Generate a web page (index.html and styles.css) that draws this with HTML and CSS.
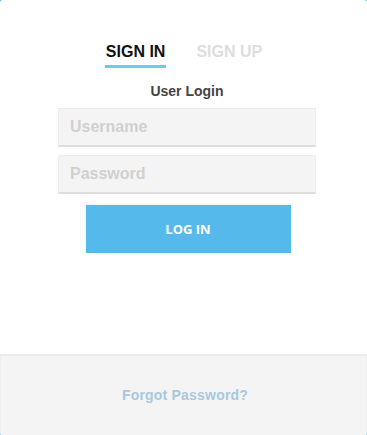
FILE: index.html
```html
<!DOCTYPE html>
<html>
<head>
<meta charset="utf-8">
<link rel="stylesheet" href="styles.css">
</head>
<body>
<div class="card">
  <div class="main">
    <div class="tabs">
      <span class="tab active">SIGN IN</span>
      <span class="tab">SIGN UP</span>
    </div>
    <div class="title">User Login</div>
    <div class="field">Username</div>
    <div class="field">Password</div>
    <div class="btn">LOG IN</div>
  </div>
  <div class="footer">
    <span class="forgot">Forgot Password?</span>
  </div>
</div>
</body>
</html>
```
FILE: styles.css
```css
html, body {
  margin: 0;
  padding: 0;
  background: #0a9cf0;
}
.card {
  width: 367px;
  height: 435px;
  background: #fff;
  border-radius: 2px;
  overflow: hidden;
  display: flex;
  flex-direction: column;
  font-family: "Liberation Sans", Arial, sans-serif;
}
.main {
  flex: 1;
  display: flex;
  flex-direction: column;
  align-items: center;
  padding-top: 43px;
  padding-left: 7px;
}
.tabs {
  display: flex;
  gap: 31px;
  margin-left: -6px;
}
.tab {
  font-size: 16px;
  font-weight: bold;
  color: #ddd;
  padding-bottom: 4px;
  line-height: 18px;
}
.tab.active {
  color: #111;
  border-bottom: 3px solid #6acde8;
  padding: 0 1px 4px;
  margin: 0 -1px;
}
.title {
  margin-top: 15px;
  font-size: 14px;
  font-weight: bold;
  color: #444;
  line-height: 16px;
}
.field {
  margin-top: 9px;
  width: 245px;
  height: 36px;
  background: #f4f4f4;
  border-top: 1px solid #ebebeb;
  border-bottom: 2px solid #dedede;
  border-left: 1px solid #eee;
  border-right: 1px solid #eee;
  padding-left: 11px;
  line-height: 36px;
  font-size: 16px;
  font-weight: bold;
  color: #d0d0d0;
}
.field + .field {
  margin-top: 8px;
}
.btn {
  margin-top: 11px;
  margin-left: 2px;
  width: 205px;
  height: 48px;
  background: #56b9ec;
  box-shadow: 0 0 2px rgba(0,0,0,0.12);
  color: #fff;
  font-family: "Open Sans", sans-serif;
  font-weight: bold;
  font-size: 13px;
  display: flex;
  align-items: center;
  justify-content: center;
}
.footer {
  height: 79px;
  background: #f4f4f4;
  border-top: 2px solid #ebebeb;
  border-left: 1px solid #eee;
  border-right: 1px solid #eee;
  display: flex;
  align-items: center;
  justify-content: center;
}
.forgot {
  font-size: 14px;
  font-weight: bold;
  color: #a8c8df;
  margin-top: -1px;
  margin-left: 3px;
  letter-spacing: 0.2px;
}
```
